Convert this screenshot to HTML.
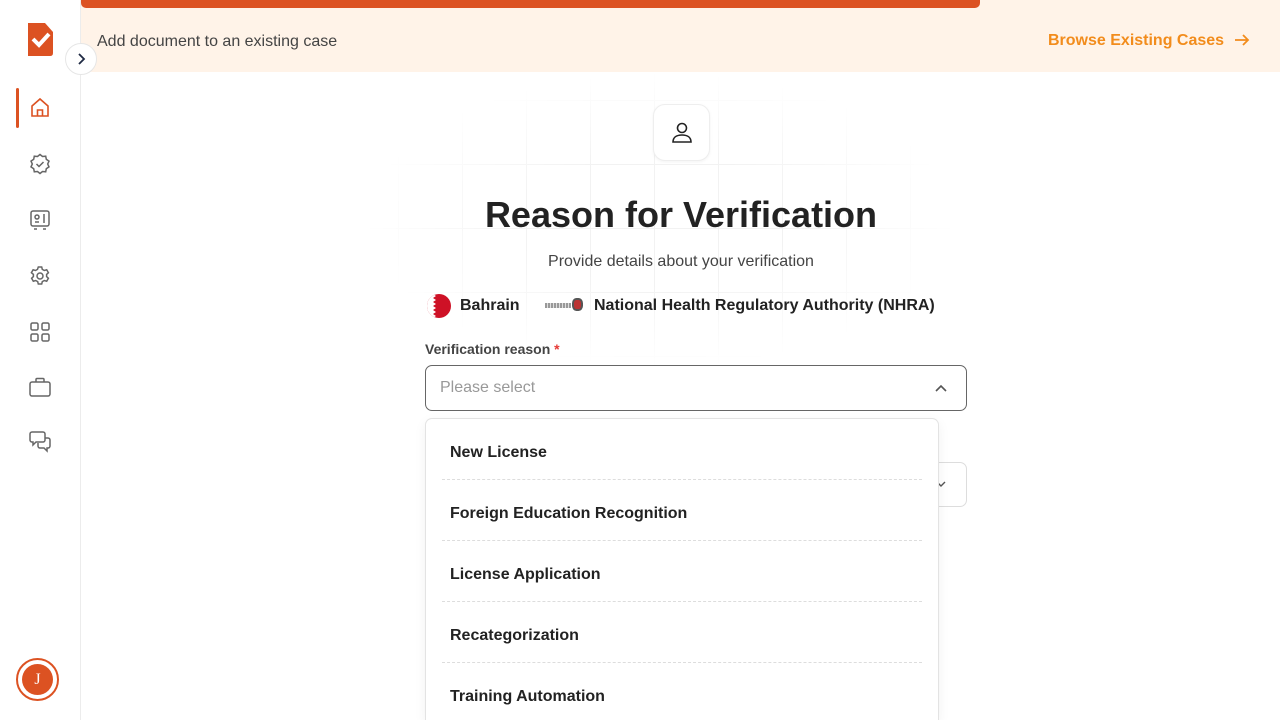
<!DOCTYPE html>
<html style="overflow:hidden;width:1280px;height:720px"><head><style>
*{box-sizing:border-box;margin:0;padding:0}
body{width:1280px;height:720px;overflow:hidden;background:#fff;font-family:"Liberation Sans",Arial,sans-serif;position:relative}
.side{position:absolute;left:0;top:0;width:81px;height:720px;border-right:1px solid #ececec;background:#fff}
.ic{position:absolute;left:28px;width:24px;height:24px}
.grid{position:absolute;left:360px;top:70px;width:600px;height:300px;
background-image:linear-gradient(#f2f2f2 1px,transparent 1px),linear-gradient(90deg,#f2f2f2 1px,transparent 1px);
background-size:64px 64px;background-position:38px 30px;
-webkit-mask-image:radial-gradient(ellipse at center,#000 30%,transparent 70%);mask-image:radial-gradient(ellipse at center,#000 30%,transparent 70%)}
.banner{position:absolute;left:81px;top:0;width:1199px;height:72px;background:#fff3e8}
.prog{position:absolute;left:81px;top:0;width:899px;height:8px;background:#dc5222;border-radius:0 0 5px 5px}
.opt{height:61px;margin:0 16px;border-bottom:1px dashed #ddd;font-weight:bold;font-size:16px;color:#222;padding:25px 0 0 8px}
</style></head><body>
<div class="side">
<svg style="position:absolute;left:28px;top:23px" width="25" height="33" viewBox="0 0 25 33"><path d="M0 0H17L25 9V30Q25 33 22 33H0Z" fill="#dc5222"/><path d="M5 16L11 22L21 11" stroke="#fff" stroke-width="4" fill="none"/></svg>
<div style="position:absolute;left:16px;top:88px;width:3px;height:40px;background:#dc5222;border-radius:2px"></div>
<svg class="ic" style="top:96px" viewBox="0 0 24 24" fill="none" stroke="#dc5222" stroke-width="1.6"><path d="M4 10L12 3L20 10V20H4Z"/><path d="M9.5 20V14H14.5V20"/></svg>
<svg class="ic" style="top:152px" viewBox="0 0 24 24" fill="none" stroke="#666" stroke-width="1.5"><path d="M12 2.5l2.5 2 3.2-.3.6 3.1 2.7 1.8-1.3 2.9 1.3 2.9-2.7 1.8-.6 3.1-3.2-.3-2.5 2-2.5-2-3.2.3-.6-3.1-2.7-1.8 1.3-2.9-1.3-2.9 2.7-1.8.6-3.1 3.2.3z"/><path d="M8.5 12l2.5 2.5 4.5-4.5"/></svg>
<svg class="ic" style="top:208px" viewBox="0 0 24 24" fill="none" stroke="#666" stroke-width="1.5"><rect x="3" y="3" width="18" height="15" rx="2"/><circle cx="9" cy="9" r="2"/><path d="M7 14h4M16 6v9M6 21h3M15 21h3"/></svg>
<svg class="ic" style="top:264px" viewBox="0 0 24 24" fill="none" stroke="#666" stroke-width="1.5"><circle cx="12" cy="12" r="3"/><path d="M10.3 3h3.4l.6 2.4 2 1.1 2.4-.7 1.7 2.9-1.8 1.7v2.2l1.8 1.7-1.7 2.9-2.4-.7-2 1.1-.6 2.4h-3.4l-.6-2.4-2-1.1-2.4.7-1.7-2.9 1.8-1.7v-2.2L3.4 8.7l1.7-2.9 2.4.7 2-1.1z"/></svg>
<svg class="ic" style="top:320px" viewBox="0 0 24 24" fill="none" stroke="#666" stroke-width="1.5"><rect x="3" y="3" width="7" height="7" rx="1.5"/><rect x="14" y="3" width="7" height="7" rx="1.5"/><rect x="3" y="14" width="7" height="7" rx="1.5"/><rect x="14" y="14" width="7" height="7" rx="1.5"/></svg>
<svg class="ic" style="top:375px" viewBox="0 0 24 24" fill="none" stroke="#666" stroke-width="1.5"><rect x="2" y="7" width="20" height="14" rx="2"/><path d="M8 7V4.5A1 1 0 0 1 9 3.5h6a1 1 0 0 1 1 1V7"/></svg>
<svg class="ic" style="top:429px" viewBox="0 0 24 24" fill="none" stroke="#666" stroke-width="1.5"><path d="M4 3h11a2 2 0 0 1 2 2v6a2 2 0 0 1-2 2H8l-3 3v-3H4a2 2 0 0 1-2-2V5a2 2 0 0 1 2-2z"/><path d="M17 9h3a2 2 0 0 1 2 2v6a2 2 0 0 1-2 2h-1v3l-3-3h-4a2 2 0 0 1-2-2v-3"/></svg>
<div style="position:absolute;left:16px;top:658px;width:43px;height:43px;border:2px solid #dc5222;border-radius:50%"></div>
<div style="position:absolute;left:22px;top:664px;width:31px;height:31px;background:#dc5222;border-radius:50%;color:#fff;font-family:'Liberation Serif',serif;font-size:16px;text-align:center;line-height:31px">J</div>
</div>
<div class="banner"></div>
<div class="prog"></div>
<div style="position:absolute;left:65px;top:43px;width:32px;height:32px;border-radius:50%;background:#fff;border:1px solid #e6e6e6;z-index:3"><svg width="30" height="30" viewBox="0 0 30 30"><path d="M13 10l5 5-5 5" stroke="#1f2a44" stroke-width="1.8" fill="none"/></svg></div>
<div style="position:absolute;left:97px;top:33px;font-size:16px;color:#444">Add document to an existing case</div>
<div style="position:absolute;left:1048px;top:32px;font-size:16px;font-weight:bold;color:#f28c1c">Browse Existing Cases</div>
<svg style="position:absolute;left:1233px;top:31px" width="18" height="18" viewBox="0 0 18 18"><path d="M2 9h13M10 4l5 5-5 5" stroke="#f28c1c" stroke-width="1.8" fill="none"/></svg>
<div class="grid"></div>
<div style="position:absolute;left:653px;top:104px;width:57px;height:57px;border:1px solid #eee;border-radius:12px;background:#fff;box-shadow:0 1px 3px rgba(0,0,0,.05)">
<svg style="position:absolute;left:15px;top:15px" width="26" height="26" viewBox="0 0 26 26" fill="none" stroke="#222" stroke-width="1.6"><circle cx="13" cy="8" r="4.5"/><path d="M4 22c0-5 4-7 9-7s9 2 9 7z"/></svg></div>
<div style="position:absolute;left:0;width:1362px;top:194px;text-align:center;font-size:36px;font-weight:bold;color:#222">Reason for Verification</div>
<div style="position:absolute;left:0;width:1362px;top:253px;text-align:center;font-size:16px;color:#444">Provide details about your verification</div>
<div style="position:absolute;left:427px;top:294px;width:24px;height:24px;border-radius:50%;background:#ce1126;overflow:hidden"><svg width="24" height="24"><path d="M0 0H6L9 2L6 4L9 6L6 8L9 10L6 12L9 14L6 16L9 18L6 20L9 22L6 24H0Z" fill="#fff"/></svg></div>
<div style="position:absolute;left:460px;top:297px;font-size:16px;font-weight:bold;color:#222">Bahrain</div>
<div style="position:absolute;left:545px;top:303px;width:26px;height:5px;background:repeating-linear-gradient(90deg,#999 0 2px,#ddd 2px 3px)"></div>
<div style="position:absolute;left:572px;top:298px;width:11px;height:13px;border-radius:40%;background:#b33;border:2px solid #555"></div>
<div style="position:absolute;left:594px;top:297px;font-size:16px;font-weight:bold;color:#222">National Health Regulatory Authority (NHRA)</div>
<div style="position:absolute;left:425px;top:341px;font-size:14px;font-weight:bold;color:#444">Verification reason <span style="color:#e53935">*</span></div>
<div style="position:absolute;left:425px;top:365px;width:542px;height:46px;border:1px solid #666;border-radius:7px;background:#fff"><div style="position:absolute;left:14px;top:13px;font-size:16px;color:#999">Please select</div><svg style="position:absolute;left:507px;top:15px" width="16" height="16"><path d="M3 10l5-5 5 5" stroke="#555" stroke-width="1.6" fill="none"/></svg></div>
<div style="position:absolute;left:425px;top:462px;width:542px;height:45px;border:1px solid #ddd;border-radius:7px"><svg style="position:absolute;left:508px;top:14px" width="14" height="14"><path d="M3 5l4 4 4-4" stroke="#555" stroke-width="1.4" fill="none"/></svg></div>
<div style="position:absolute;left:425px;top:418px;width:514px;height:302px;border:1px solid #e3e3e3;border-bottom:none;border-radius:7px 7px 0 0;background:#fff;box-shadow:0 4px 12px rgba(0,0,0,.06);overflow:hidden">
<div class="opt">New License</div>
<div class="opt">Foreign Education Recognition</div>
<div class="opt">License Application</div>
<div class="opt">Recategorization</div>
<div class="opt" style="border:none">Training Automation</div>
</div>
</body></html>
